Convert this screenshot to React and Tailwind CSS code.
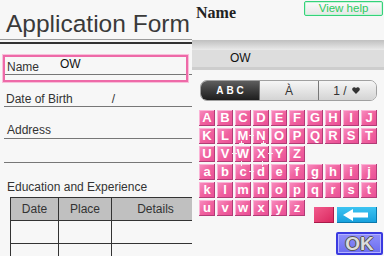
import React from 'react';

const sans = "font-['Liberation_Sans',Arial,sans-serif]";

const Key = ({ ch }) => (
  <div className="w-4 h-4 flex items-center justify-center pb-px bg-linear-to-br from-[#f88fc2] via-[#f0629f] to-[#e94c95] shadow-[inset_-1px_-1px_0_#b23c76,inset_1px_1px_0_#fbb3d6] text-white text-[13px] font-bold leading-none">
    {ch}
  </div>
);

const Plus = ({ x, y }) => (
  <div className="absolute w-[5px] h-[5px]" style={{ left: x, top: y }}>
    <div className="absolute left-[2px] top-0 w-px h-[5px] bg-[#f4f4f4]" />
    <div className="absolute left-0 top-[2px] w-[5px] h-px bg-[#f4f4f4]" />
  </div>
);

const rows = ['ABCDEFGHIJ', 'KLMNOPQRST', 'UVWXYZ', 'abcdefghij', 'klmnopqrst'];

const pluses = [
  [50, 23], [40, 31], [62, 31], [33, 41], [69, 41], [40, 51], [61, 51], [50, 59],
];

export default function App() {
  return (
    <div className={`w-[384px] h-[256px] flex bg-[#f7f7f7] overflow-hidden ${sans}`}>
      {/* form sheet */}
      <div className="relative w-[192px] h-full overflow-hidden text-[#333]">
        <div className="mt-[10px] h-[28px] pl-[6px] text-[24.5px] leading-[28px] whitespace-nowrap text-[#3a3a3a]">
          Application Form
        </div>
        <div className="mt-px h-px bg-[#9a9a9a]" />
        <div className="mt-[2px] h-[2px] bg-[#333]" />

        <div className="mt-[14px] ml-[4px] h-[17px] border-b border-[#777] flex items-start text-[12px] leading-[14px]">
          <span className="pt-[2px] pl-[3px]">Name</span>
          <span className="-mt-px ml-[21px] text-[#111]">OW</span>
        </div>
        <div className="absolute left-[3px] top-[55px] w-[185px] h-[27px] border-2 border-[#ee6aa8] shadow-[0_0_0_1px_#f8bfda]" />

        <div className="mt-[15px] ml-[4px] h-[17px] border-b border-[#777] flex items-start text-[12px] leading-[14px]">
          <span className="pt-[2px] pl-[2px]">Date of Birth</span>
          <span className="pt-[2px] ml-[39px]">/</span>
        </div>

        <div className="mt-[15px] ml-[4px] h-[17px] border-b border-[#777] text-[12px] leading-[14px]">
          <span className="block pt-[1px] pl-[3px]">Address</span>
        </div>
        <div className="ml-[4px] h-[24px] border-b border-[#777]" />

        <div className="mt-[17px] h-[14px] pl-[7px] text-[12px] leading-[14px]">Education and Experience</div>

        <div className="mt-[3px] ml-[10px] w-[200px] grid grid-cols-[47px_52px_1fr] gap-px p-px bg-[#333] text-[12px]">
          <div className="h-[22px] bg-[#c0c0c0] flex items-center justify-center">Date</div>
          <div className="h-[22px] bg-[#c0c0c0] flex items-center justify-center">Place</div>
          <div className="h-[22px] bg-[#c0c0c0] flex items-center justify-center pr-[10px]">Details</div>
          {[0, 1].map((r) => (
            <React.Fragment key={r}>
              <div className="h-[22px] bg-[#f7f7f7]" />
              <div className="h-[22px] bg-[#f7f7f7]" />
              <div className="h-[22px] bg-[#f7f7f7]" />
            </React.Fragment>
          ))}
        </div>
      </div>

      {/* keyboard panel */}
      <div className="w-[192px] h-full flex flex-col bg-[#f7f7f7]">
        <div className="h-[40px] flex items-start justify-between pl-[4px] pr-px">
          <span className="pt-[5px] text-[16px] leading-[16px] font-bold text-[#222] font-['Liberation_Serif',serif]">Name</span>
          <button className="mt-px w-[79px] h-[15px] border border-[#34d27a] rounded-[2px] bg-linear-to-b from-[#fbfbfb] to-[#e6e6e6] shadow-[inset_0_0_0_1px_#c9f3d9] text-[11.5px] leading-none text-[#2ccb5e] flex items-center justify-center">
            View help
          </button>
        </div>

        <div className="h-[30px] flex flex-col">
          <div className="h-[10px] bg-linear-to-b from-[#c0c0c0] to-[#eaeaea]" />
          <div className="h-[17px] bg-[#dddddd] pl-[38px] text-[12px] leading-[14px] text-[#111]">
            <span className="block pt-px">OW</span>
          </div>
          <div className="h-[3px] bg-[#cdcdcd]" />
        </div>

        <div className="mt-[10px] ml-[8px] w-[177px] h-[21px] flex rounded-[7px] overflow-hidden border border-[#a0a0a0]">
          <div className="w-[58px] flex items-center justify-center pl-[3px] bg-linear-to-b from-[#5e5e5e] to-[#1e1e1e] text-white text-[10px] font-bold tracking-[3px]">
            ABC
          </div>
          <div className="w-[59px] border-l border-[#777] flex items-center justify-center bg-linear-to-b from-[#f6f6f6] to-[#d4d4d4] text-[12px] text-[#333]">
            À
          </div>
          <div className="flex-1 border-l border-[#777] flex items-center justify-center gap-[5px] pr-[2px] bg-linear-to-b from-[#f6f6f6] to-[#d4d4d4] text-[12px] text-[#333]">
            <span>1 /</span>
            <svg width="8" height="7" viewBox="0 0 8 7">
              <path d="M4 7 L0.6 3.4 A1.9 1.9 0 0 1 4 1.2 A1.9 1.9 0 0 1 7.4 3.4 Z" fill="#333" />
            </svg>
          </div>
        </div>

        <div className="relative mt-[9px] ml-[7px] flex flex-col gap-[2px]">
          {rows.map((row) => (
            <div key={row} className="flex gap-[2px]">
              {row.split('').map((ch) => (
                <Key key={ch} ch={ch} />
              ))}
            </div>
          ))}
          <div className="flex gap-[2px] items-start">
            {'uvwxyz'.split('').map((ch) => (
              <Key key={ch} ch={ch} />
            ))}
            <div className="mt-[7px] ml-[7px] w-[20px] h-4 bg-linear-to-br from-[#f25a8d] to-[#d9205d] shadow-[inset_-1px_-1px_0_#a81a4a]" />
            <div className="mt-[7px] ml-px w-[40px] h-4 bg-linear-to-b from-[#3cc4f2] to-[#139fdc] shadow-[inset_-1px_-1px_0_#0b78ac] flex items-center">
              <svg width="40" height="16" viewBox="0 0 40 16">
                <path d="M6 8 L16 2 L16 5.5 L31 5.5 L31 10.5 L16 10.5 L16 14 Z" fill="#fff" />
              </svg>
            </div>
          </div>
          {pluses.map(([x, y], i) => (
            <Plus key={i} x={x} y={y} />
          ))}
        </div>

        <div className="mt-[9px] flex justify-end pr-px">
          <button className="w-[47px] h-[23px] border-2 border-[#3a3ae0] rounded-[2px] bg-linear-to-b from-[#9090fa] to-[#6c6cf0] shadow-[inset_0_0_0_1px_#b4b4ff] flex items-center justify-center text-[19px] font-bold leading-none text-[#dcdcdc] [text-shadow:1px_0_0_#555,-1px_0_0_#555,0_1px_0_#555,0_-1px_0_#555]">
            OK
          </button>
        </div>
      </div>
    </div>
  );
}
